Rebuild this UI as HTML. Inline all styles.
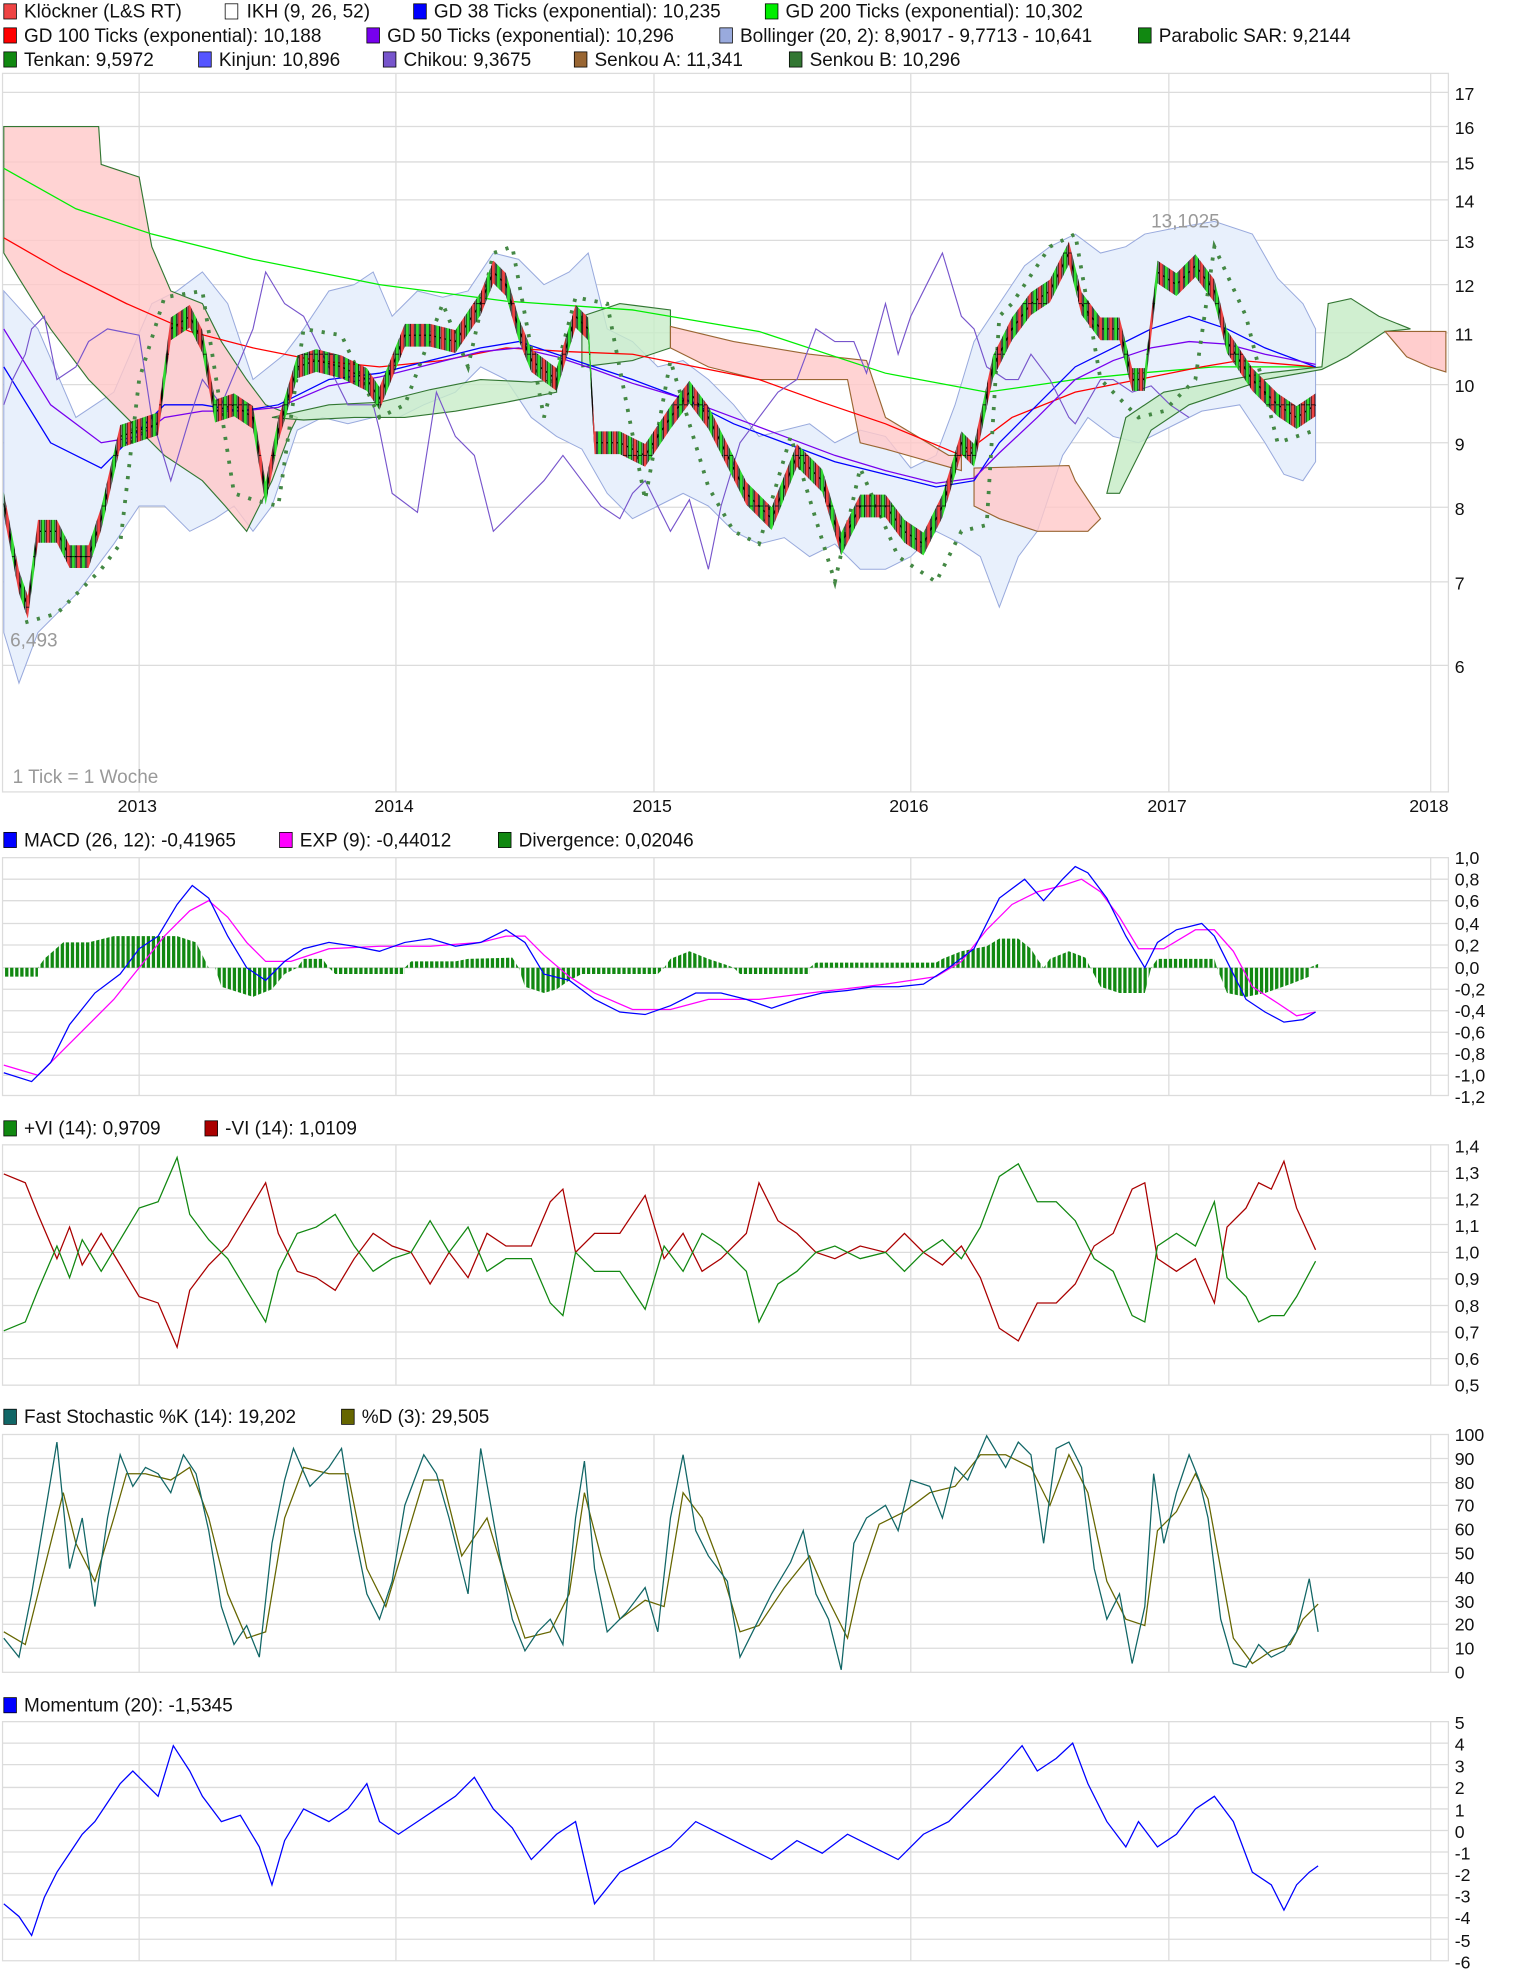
<!DOCTYPE html>
<html><head><meta charset="utf-8"><style>
html,body{margin:0;padding:0;background:#fff}
svg{display:block}
text{font-family:"Liberation Sans",sans-serif;font-size:15px;fill:#111}
.g{stroke:#dcdcdc;stroke-width:1;fill:none}
.ax text{font-size:14px}
</style></head><body>
<svg width="1520" height="1981" viewBox="0 0 1201.6 1566" xmlns="http://www.w3.org/2000/svg">
<defs>
<pattern id="bars" width="4" height="10" patternUnits="userSpaceOnUse"><rect x="0" y="0" width="2.6" height="10" fill="#118811"/></pattern>
<pattern id="cdl" width="8" height="40" patternUnits="userSpaceOnUse"><rect x="0.5" y="0" width="3" height="40" fill="#33dd33" stroke="#000" stroke-width="0.6"/><rect x="4.5" y="0" width="3" height="40" fill="#ee4444" stroke="#000" stroke-width="0.6"/></pattern>
</defs>
<g>
<rect x="3" y="3" width="10" height="12" fill="#ee4444" stroke="#000" stroke-width="0.6"/><text x="19" y="14">Klöckner (L&amp;S RT)</text>
<rect x="178" y="3" width="10" height="12" fill="#fff" stroke="#000" stroke-width="0.6"/><text x="195" y="14">IKH (9, 26, 52)</text>
<rect x="327" y="3" width="10" height="12" fill="#0000ff" stroke="#000" stroke-width="0.6"/><text x="343" y="14">GD 38 Ticks (exponential): 10,235</text>
<rect x="605" y="3" width="10" height="12" fill="#00ee00" stroke="#000" stroke-width="0.6"/><text x="621" y="14">GD 200 Ticks (exponential): 10,302</text>
<rect x="3" y="22" width="10" height="12" fill="#ff0000" stroke="#000" stroke-width="0.6"/><text x="19" y="33">GD 100 Ticks (exponential): 10,188</text>
<rect x="290" y="22" width="10" height="12" fill="#7700ee" stroke="#000" stroke-width="0.6"/><text x="306" y="33">GD 50 Ticks (exponential): 10,296</text>
<rect x="569" y="22" width="10" height="12" fill="#99aadd" stroke="#000" stroke-width="0.6"/><text x="585" y="33">Bollinger (20, 2): 8,9017 - 9,7713 - 10,641</text>
<rect x="900" y="22" width="10" height="12" fill="#118811" stroke="#000" stroke-width="0.6"/><text x="916" y="33">Parabolic SAR: 9,2144</text>
<rect x="3" y="41" width="10" height="12" fill="#118811" stroke="#000" stroke-width="0.6"/><text x="19" y="52">Tenkan: 9,5972</text>
<rect x="157" y="41" width="10" height="12" fill="#5555ff" stroke="#000" stroke-width="0.6"/><text x="173" y="52">Kinjun: 10,896</text>
<rect x="303" y="41" width="10" height="12" fill="#7755cc" stroke="#000" stroke-width="0.6"/><text x="319" y="52">Chikou: 9,3675</text>
<rect x="454" y="41" width="10" height="12" fill="#996633" stroke="#000" stroke-width="0.6"/><text x="470" y="52">Senkou A: 11,341</text>
<rect x="624" y="41" width="10" height="12" fill="#337733" stroke="#000" stroke-width="0.6"/><text x="640" y="52">Senkou B: 10,296</text>
<rect x="3" y="658" width="10" height="12" fill="#0000ff" stroke="#000" stroke-width="0.6"/><text x="19" y="669">MACD (26, 12): -0,41965</text>
<rect x="221" y="658" width="10" height="12" fill="#ff00ff" stroke="#000" stroke-width="0.6"/><text x="237" y="669">EXP (9): -0,44012</text>
<rect x="394" y="658" width="10" height="12" fill="#118811" stroke="#000" stroke-width="0.6"/><text x="410" y="669">Divergence: 0,02046</text>
<rect x="3" y="886" width="10" height="12" fill="#118811" stroke="#000" stroke-width="0.6"/><text x="19" y="897">+VI (14): 0,9709</text>
<rect x="162" y="886" width="10" height="12" fill="#aa0000" stroke="#000" stroke-width="0.6"/><text x="178" y="897">-VI (14): 1,0109</text>
<rect x="3" y="1114" width="10" height="12" fill="#116666" stroke="#000" stroke-width="0.6"/><text x="19" y="1125">Fast Stochastic %K (14): 19,202</text>
<rect x="270" y="1114" width="10" height="12" fill="#666600" stroke="#000" stroke-width="0.6"/><text x="286" y="1125">%D (3): 29,505</text>
<rect x="3" y="1342" width="10" height="12" fill="#0000ff" stroke="#000" stroke-width="0.6"/><text x="19" y="1353">Momentum (20): -1,5345</text>
</g>

<g class="g">
<rect x="2" y="58" width="1143" height="568"/>
<path d="M2 73H1145M2 100H1145M2 128H1145M2 158H1145M2 190H1145M2 225H1145M2 263H1145M2 304H1145M2 350H1145M2 401H1145M2 460H1145M2 526H1145"/>
<path d="M110 58V626M313 58V626M517 58V626M720 58V626M924 58V626M1131 58V626"/>
</g>
<g class="ax">
<text x="1150" y="79">17</text><text x="1150" y="106">16</text><text x="1150" y="134">15</text><text x="1150" y="164">14</text><text x="1150" y="196">13</text><text x="1150" y="231">12</text><text x="1150" y="269">11</text><text x="1150" y="310">10</text><text x="1150" y="356">9</text><text x="1150" y="407">8</text><text x="1150" y="466">7</text><text x="1150" y="532">6</text>
<text x="93" y="642">2013</text><text x="296" y="642">2014</text><text x="500" y="642">2015</text><text x="703" y="642">2016</text><text x="907" y="642">2017</text><text x="1114" y="642">2018</text>
</g>
<polygon fill="#e8f0fc" stroke="#99aadd" stroke-width="0.8" points="3,230 30,260 60,330 90,310 120,240 140,230 160,215 180,240 200,300 225,280 240,260 260,230 280,225 295,215 310,250 330,230 350,235 370,230 390,200 410,205 430,225 450,215 465,200 480,260 500,270 520,290 540,285 560,300 580,320 600,345 620,340 640,335 660,350 680,340 700,345 720,370 740,360 755,320 770,270 790,240 810,210 830,195 850,185 870,200 890,195 905,185 930,180 960,175 990,185 1010,220 1030,240 1040,260 1040,365 1030,380 1015,375 1000,350 980,320 950,325 920,340 900,350 880,345 860,330 840,360 820,420 805,440 790,480 775,440 760,430 740,420 720,440 700,450 680,450 660,430 640,440 620,425 600,430 580,420 560,400 540,390 520,400 500,410 480,390 460,355 440,345 420,330 400,300 380,290 360,310 335,320 315,330 295,330 275,335 255,330 235,340 215,400 200,420 185,400 170,410 150,420 130,400 110,400 90,430 60,470 30,500 15,540 3,500"/>
<g stroke-width="0.9">
<polygon fill="#ffc8c8" fill-opacity="0.8" stroke="#337733" points="3,100 78,100 80,130 110,140 120,195 135,230 160,240 175,270 195,300 210,320 235,330 230,340 215,380 195,420 178,400 160,380 130,360 100,330 70,300 40,260 15,220 3,200"/>
<polygon fill="#c8ecc8" fill-opacity="0.8" stroke="#337733" points="215,330 260,320 300,318 340,308 380,300 420,302 440,300 440,310 400,318 360,325 320,330 280,330 240,332"/>
<polygon fill="#c8ecc8" fill-opacity="0.8" stroke="#337733" points="460,250 490,240 530,245 530,262 530,275 500,285 460,290"/>
<polygon fill="#ffc8c8" fill-opacity="0.8" stroke="#996633" points="530,258 580,270 640,280 685,285 700,330 750,360 760,360 760,372 700,355 680,350 670,300 640,300 600,300 560,290 530,275"/>
<polygon fill="#ffc8c8" fill-opacity="0.8" stroke="#996633" points="770,370 845,368 850,380 870,410 860,420 820,420 790,410 770,400"/>
<polygon fill="#c8ecc8" fill-opacity="0.85" stroke="#337733" points="875,390 890,330 920,310 1000,295 1045,290 1050,240 1068,236 1090,250 1115,260 1095,262 1080,272 1065,282 1045,292 1000,300 940,320 910,340 885,390"/>
<polygon fill="#ffc8c8" fill-opacity="0.9" stroke="#996633" points="1095,262 1143,262 1143,294 1130,290 1112,282"/>
</g>
<polyline fill="none" stroke="#00ee00" stroke-width="1" points="3,133 60,165 120,185 200,205 300,225 400,238 500,245 600,262 700,295 780,310 850,300 900,295 960,290 1040,290"/>
<polyline fill="none" stroke="#ff0000" stroke-width="1" points="3,188 50,215 100,240 150,262 200,275 250,285 300,290 350,285 400,275 450,278 500,280 550,290 600,300 650,318 700,335 760,360 800,330 850,310 900,300 950,290 980,285 1040,290"/>
<polyline fill="none" stroke="#0000ff" stroke-width="1" points="3,290 40,350 80,370 110,340 130,320 160,320 190,325 220,320 260,300 300,295 340,285 380,275 410,270 440,280 470,290 500,300 540,315 580,335 620,350 660,365 700,375 740,385 770,380 790,350 820,320 850,290 880,275 910,260 940,250 970,260 1000,275 1040,290"/>
<polyline fill="none" stroke="#7700ee" stroke-width="1" points="3,260 40,320 80,350 110,345 130,330 160,325 190,325 220,322 260,305 300,298 340,288 380,278 410,275 440,282 470,292 500,303 540,315 580,330 620,345 660,360 700,372 740,382 770,378 790,358 820,330 850,300 880,285 910,275 940,270 970,272 1000,280 1040,288"/>
<polyline fill="none" stroke="#7755cc" stroke-width="0.9" points="3,320 10,300 20,280 25,260 35,250 45,300 60,290 70,270 85,260 110,265 120,330 135,380 150,330 160,300 175,320 200,260 210,215 225,240 240,250 260,290 275,320 295,320 300,340 310,390 330,405 345,310 360,345 375,360 390,420 410,400 430,380 445,360 460,380 475,400 490,410 500,390 510,380 520,400 530,420 545,395 560,450 570,400 585,350 600,330 615,310 630,300 645,260 660,270 675,270 685,295 700,240 710,280 720,250 735,220 745,200 760,250 770,260 780,290 795,300 805,300 815,280 830,300 845,330 850,335 870,300 880,300 895,310 910,305 925,320 940,330"/>
<!-- SAR -->
<polyline fill="none" stroke="#448844" stroke-width="3" stroke-dasharray="2.5 7" points="20,492 45,485 65,465 80,450 95,430 110,300 130,235 160,230 185,390 200,395 220,400 240,260 270,265 300,330 320,320 350,240 370,290 390,200 405,195 430,330 455,235 480,240 510,395 530,285 560,385 580,420 600,430 625,345 660,460 680,370 710,440 740,460 760,420 780,415 790,250 800,240 830,195 850,185 870,300 900,330 920,325 945,300 960,195 985,250 1010,350 1040,340"/>
<!-- price wicks -->
<polyline fill="none" stroke="#000" stroke-width="1" points="3,398 15,460 22,480 30,420 45,420 55,440 70,440 80,410 95,345 110,340 125,335 135,260 150,250 160,270 170,325 185,320 200,330 210,390 220,340 235,290 250,285 270,290 290,300 300,315 320,265 340,265 360,270 380,240 390,215 400,225 410,260 420,285 440,300 455,250 465,260 470,350 490,350 510,360 530,330 545,310 560,330 575,360 590,390 610,410 630,360 650,380 665,430 680,400 700,400 715,420 730,430 745,400 760,350 770,360 785,290 800,260 815,240 830,230 845,200 855,240 870,260 885,260 895,300 905,300 915,215 930,225 945,210 960,230 970,270 990,300 1010,320 1025,330 1040,320"/>
<!-- candle band -->
<polygon fill="url(#cdl)" points="3,389 15,451 22,471 30,411 45,411 55,431 70,431 80,401 95,336 110,331 125,326 135,251 150,241 160,261 170,316 185,311 200,321 210,381 220,331 235,281 250,276 270,281 290,291 300,306 320,256 340,256 360,261 380,231 390,206 400,216 410,251 420,276 440,291 455,241 465,251 470,341 490,341 510,351 530,321 545,301 560,321 575,351 590,381 610,401 630,351 650,371 665,421 680,391 700,391 715,411 730,421 745,391 760,341 770,351 785,281 800,251 815,231 830,221 845,191 855,231 870,251 885,251 895,291 905,291 915,206 930,216 945,201 960,221 970,261 990,291 1010,311 1025,321 1040,311 1040,329 1025,339 1010,329 990,309 970,279 960,239 945,219 930,234 915,224 905,309 895,309 885,269 870,269 855,249 845,209 830,239 815,249 800,269 785,299 770,369 760,359 745,409 730,439 715,429 700,409 680,409 665,439 650,389 630,369 610,419 590,399 575,369 560,339 545,319 530,339 510,369 490,359 470,359 465,269 455,259 440,309 420,294 410,269 400,234 390,224 380,249 360,279 340,274 320,274 300,324 290,309 270,299 250,294 235,299 220,349 210,399 200,339 185,329 170,334 160,279 150,259 135,269 125,344 110,349 95,354 80,419 70,449 55,449 45,429 30,429 22,489 15,469 3,407"/>
<text x="8" y="511" style="fill:#999">6,493</text>
<text x="910" y="180" style="fill:#999">13,1025</text>
<text x="10" y="619" style="fill:#999">1 Tick = 1 Woche</text>

<g class="g">
<rect x="2" y="678" width="1143" height="188"/>
<path d="M2 695H1145M2 712H1145M2 730H1145M2 747H1145M2 765H1145M2 782H1145M2 799H1145M2 816H1145M2 833H1145M2 850H1145"/>
<path d="M110 678V866M313 678V866M517 678V866M720 678V866M924 678V866M1131 678V866"/>
</g>
<g class="ax">
<text x="1150" y="683">1,0</text><text x="1150" y="700">0,8</text><text x="1150" y="717">0,6</text><text x="1150" y="735">0,4</text><text x="1150" y="752">0,2</text><text x="1150" y="770">0,0</text><text x="1150" y="787">-0,2</text><text x="1150" y="804">-0,4</text><text x="1150" y="821">-0,6</text><text x="1150" y="838">-0,8</text><text x="1150" y="855">-1,0</text><text x="1150" y="872">-1,2</text>
</g>
<polygon fill="url(#bars)" points="3,765 3,772 30,772 30,765 35,758 50,745 70,745 90,740 110,740 140,740 155,745 165,765 170,765 175,780 200,788 215,782 225,770 235,765 240,758 255,758 260,765 265,770 320,770 320,765 325,760 360,760 370,758 405,757 410,765 415,780 430,785 440,782 450,775 460,770 465,770 520,770 525,765 530,758 545,752 560,758 575,763 580,765 585,770 640,770 640,765 645,761 740,761 745,758 760,752 780,748 790,742 805,742 815,750 820,758 825,765 830,758 845,752 858,757 862,765 870,780 885,785 905,785 910,765 915,758 960,758 962,765 970,785 985,788 1000,785 1020,778 1035,772 1035,765 1042,762 1042,765"/>
<polyline fill="none" stroke="#ff00ff" stroke-width="1" points="3,842 30,850 50,830 70,810 90,790 110,765 130,740 150,720 165,712 180,725 195,745 210,760 230,760 260,750 300,748 340,748 380,745 400,740 415,740 430,755 450,772 470,785 500,798 530,798 560,790 600,790 640,785 700,778 740,772 760,760 780,735 800,715 820,705 840,700 855,695 870,705 885,725 900,750 920,750 945,735 960,735 975,752 990,780 1010,793 1025,803 1040,800"/>
<polyline fill="none" stroke="#0000ff" stroke-width="1" points="3,848 25,855 40,840 55,810 75,785 95,770 110,750 125,740 140,715 152,700 165,710 180,740 195,765 210,775 225,760 240,750 260,745 280,748 300,752 320,745 340,742 360,748 380,745 400,735 415,745 430,770 450,775 470,790 490,800 510,802 530,795 550,785 570,785 590,790 610,797 630,790 650,785 670,783 690,780 710,780 730,778 750,765 770,750 790,710 810,695 825,712 840,695 850,685 860,690 875,710 890,740 905,765 915,745 930,735 950,730 960,740 970,760 985,790 1000,800 1015,808 1030,806 1040,800"/>

<g class="g">
<rect x="2" y="905" width="1143" height="190"/>
<path d="M2 926H1145M2 947H1145M2 968H1145M2 990H1145M2 1011H1145M2 1032H1145M2 1053H1145M2 1074H1145"/>
<path d="M110 905V1095M313 905V1095M517 905V1095M720 905V1095M924 905V1095M1131 905V1095"/>
</g>
<g class="ax">
<text x="1150" y="911">1,4</text><text x="1150" y="932">1,3</text><text x="1150" y="953">1,2</text><text x="1150" y="974">1,1</text><text x="1150" y="995">1,0</text><text x="1150" y="1016">0,9</text><text x="1150" y="1037">0,8</text><text x="1150" y="1058">0,7</text><text x="1150" y="1079">0,6</text><text x="1150" y="1100">0,5</text>
</g>
<polyline fill="none" stroke="#aa0000" stroke-width="1" points="3,928 20,935 30,960 45,995 55,970 65,1000 80,975 95,1000 110,1025 125,1030 140,1065 150,1020 165,1000 180,985 195,960 210,935 220,975 235,1005 250,1010 265,1020 280,995 295,975 310,985 325,990 340,1015 355,990 370,1010 385,975 400,985 420,985 435,950 445,940 455,990 470,975 490,975 510,945 525,995 540,975 555,1005 570,995 590,975 600,935 615,965 630,975 645,990 660,995 680,985 700,990 715,975 730,990 745,1000 760,985 775,1010 790,1050 805,1060 820,1030 835,1030 850,1015 865,985 880,975 895,940 905,935 915,995 930,1005 945,995 960,1030 970,970 985,955 995,935 1005,940 1015,918 1025,955 1040,988"/>
<polyline fill="none" stroke="#118811" stroke-width="1" points="3,1052 20,1045 30,1020 45,985 55,1010 65,980 80,1005 95,980 110,955 125,950 140,915 150,960 165,980 180,995 195,1020 210,1045 220,1005 235,975 250,970 265,960 280,985 295,1005 310,995 325,990 340,965 355,990 370,970 385,1005 400,995 420,995 435,1030 445,1040 455,990 470,1005 490,1005 510,1035 525,985 540,1005 555,975 570,985 590,1005 600,1045 615,1015 630,1005 645,990 660,985 680,995 700,990 715,1005 730,990 745,980 760,995 775,970 790,930 805,920 820,950 835,950 850,965 865,995 880,1005 895,1040 905,1045 915,985 930,975 945,985 960,950 970,1010 985,1025 995,1045 1005,1040 1015,1040 1025,1025 1040,997"/>

<g class="g">
<rect x="2" y="1134" width="1143" height="188"/>
<path d="M2 1153H1145M2 1172H1145M2 1190H1145M2 1209H1145M2 1228H1145M2 1247H1145M2 1266H1145M2 1284H1145M2 1303H1145"/>
<path d="M110 1134V1322M313 1134V1322M517 1134V1322M720 1134V1322M924 1134V1322M1131 1134V1322"/>
</g>
<g class="ax">
<text x="1150" y="1139">100</text><text x="1150" y="1158">90</text><text x="1150" y="1177">80</text><text x="1150" y="1195">70</text><text x="1150" y="1214">60</text><text x="1150" y="1233">50</text><text x="1150" y="1252">40</text><text x="1150" y="1271">30</text><text x="1150" y="1289">20</text><text x="1150" y="1308">10</text><text x="1150" y="1327">0</text>
</g>
<polyline fill="none" stroke="#666600" stroke-width="1" points="3,1290 20,1300 35,1240 50,1180 60,1220 75,1250 90,1200 100,1165 115,1165 135,1170 150,1160 165,1200 180,1260 195,1295 210,1290 225,1200 240,1160 260,1165 275,1165 290,1240 305,1270 320,1220 335,1170 350,1170 365,1230 385,1200 400,1250 415,1295 435,1290 450,1260 462,1180 475,1230 490,1280 510,1265 525,1270 540,1180 555,1200 570,1240 585,1290 600,1285 620,1255 640,1230 655,1265 670,1295 680,1250 695,1205 715,1195 735,1180 755,1175 775,1150 795,1150 815,1160 830,1190 845,1150 860,1180 875,1250 890,1280 905,1285 915,1210 930,1195 945,1165 955,1185 965,1240 975,1295 990,1315 1005,1305 1020,1300 1030,1280 1042,1268"/>
<polyline fill="none" stroke="#116666" stroke-width="1" points="3,1295 15,1310 25,1260 35,1200 45,1140 55,1240 65,1200 75,1270 85,1200 95,1150 105,1175 115,1160 125,1165 135,1180 145,1150 155,1165 165,1210 175,1270 185,1300 195,1285 205,1310 215,1220 225,1170 232,1145 245,1175 260,1160 270,1145 280,1210 290,1260 300,1280 310,1250 320,1190 335,1150 345,1165 355,1200 370,1260 380,1145 395,1230 405,1280 415,1305 425,1290 435,1280 445,1300 455,1200 462,1155 470,1240 480,1290 495,1275 510,1255 520,1290 530,1200 540,1150 550,1210 560,1230 575,1250 585,1310 595,1290 610,1260 625,1235 635,1210 645,1260 655,1280 665,1320 675,1220 685,1200 700,1190 710,1210 720,1170 735,1175 745,1200 755,1160 765,1170 780,1135 795,1160 805,1140 815,1150 825,1220 835,1145 845,1140 855,1160 865,1240 875,1280 885,1260 895,1315 905,1270 912,1165 920,1220 930,1180 940,1150 948,1170 955,1200 965,1280 975,1315 985,1318 995,1300 1005,1310 1015,1305 1025,1290 1035,1248 1042,1290"/>

<g class="g">
<rect x="2" y="1361" width="1143" height="189"/>
<path d="M2 1378H1145M2 1395H1145M2 1413H1145M2 1430H1145M2 1447H1145M2 1464H1145M2 1481H1145M2 1498H1145M2 1516H1145M2 1533H1145"/>
<path d="M110 1361V1550M313 1361V1550M517 1361V1550M720 1361V1550M924 1361V1550M1131 1361V1550"/>
</g>
<g class="ax">
<text x="1150" y="1367">5</text><text x="1150" y="1384">4</text><text x="1150" y="1401">3</text><text x="1150" y="1418">2</text><text x="1150" y="1436">1</text><text x="1150" y="1453">0</text><text x="1150" y="1470">-1</text><text x="1150" y="1487">-2</text><text x="1150" y="1504">-3</text><text x="1150" y="1521">-4</text><text x="1150" y="1539">-5</text><text x="1150" y="1556">-6</text>
</g>
<polyline fill="none" stroke="#0000ff" stroke-width="1" points="3,1505 15,1515 25,1530 35,1500 45,1480 55,1465 65,1450 75,1440 85,1425 95,1410 105,1400 115,1410 125,1420 137,1380 150,1400 160,1420 175,1440 190,1435 205,1460 215,1490 225,1455 240,1430 260,1440 275,1430 290,1410 300,1440 315,1450 330,1440 345,1430 360,1420 375,1405 390,1430 405,1445 420,1470 440,1450 455,1440 470,1505 490,1480 510,1470 530,1460 550,1440 570,1450 590,1460 610,1470 630,1455 650,1465 670,1450 690,1460 710,1470 730,1450 750,1440 770,1420 790,1400 808,1380 820,1400 835,1390 848,1378 860,1410 875,1440 890,1460 900,1440 915,1460 930,1450 945,1430 960,1420 975,1440 990,1480 1005,1490 1015,1510 1025,1490 1035,1480 1042,1475"/>
</svg>
</body></html>
